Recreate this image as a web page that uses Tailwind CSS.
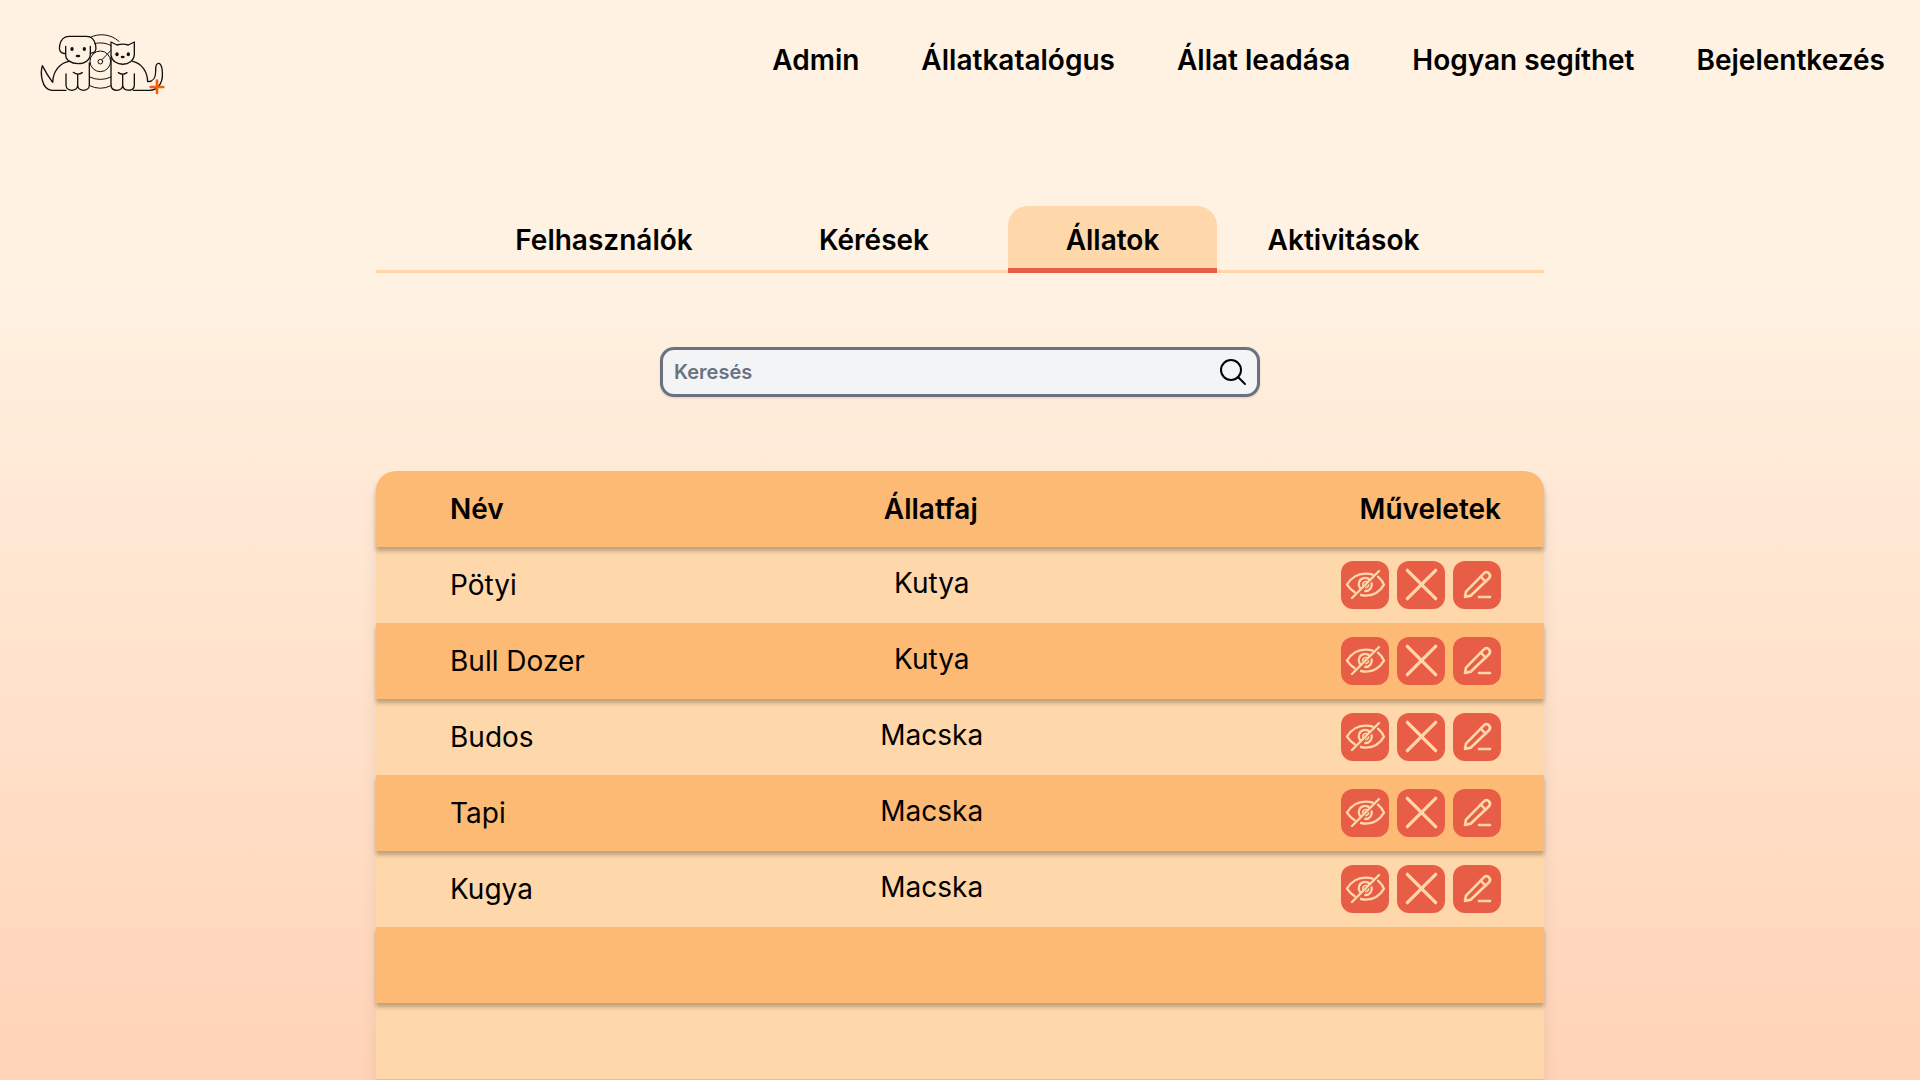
<!DOCTYPE html>
<html lang="hu">
<head>
<meta charset="utf-8">
<meta name="viewport" content="width=device-width, initial-scale=1">
<title>Admin – Állatok</title>
<script src="https://cdn.jsdelivr.net/npm/@tailwindcss/browser@4"></script>
</head>
<body class="h-screen overflow-hidden bg-linear-to-b from-[#fff2e2] from-25% to-[#ffd3b6] font-['Inter',sans-serif] text-[28px] leading-10 text-black">

<!-- Shared icon shapes -->
<svg class="hidden" aria-hidden="true">
  <symbol id="icon-hide" viewBox="0 0 144 144">
    <g fill="none" stroke="currentColor" stroke-width="7" stroke-linecap="round" stroke-linejoin="round">
      <path d="M41 94C32 88 24 80 18 71C31 49 51 38 74 38C82 38 89 39 95 41"/>
      <path d="M111 47C118 53 125 62 129 71C116 93 97 104 75 104C69 104 64 103 60 102"/>
      <path d="M86 56A19 19 0 0 0 59 83"/>
      <path d="M92 67A19 19 0 0 1 73 90"/>
      <path d="M78 62A10 10 0 0 0 65 72M83 72A10 10 0 0 1 75 80" stroke-width="5"/>
      <path d="M114 30L33 111"/>
    </g>
  </symbol>
  <symbol id="icon-delete" viewBox="0 0 144 144">
    <path d="M31 28L116 113M116 28L31 113" fill="none" stroke="currentColor" stroke-width="10" stroke-linecap="round"/>
  </symbol>
  <symbol id="icon-edit" viewBox="0 0 144 144">
    <g fill="none" stroke="currentColor" stroke-width="8" stroke-linecap="round" stroke-linejoin="round">
      <path d="M36 108L39 92L92 38Q99 30 107 36Q115 43 108 52L53 104Z"/>
      <path d="M83 47L98 62"/>
      <path d="M78 108H111"/>
    </g>
  </symbol>
</svg>

<header class="flex items-start justify-between pt-5 pr-[35px] pl-[30px]">
  <a href="#" aria-label="Kezdőlap" class="shrink-0">
    <svg class="h-[85px] w-[150px]" viewBox="0 0 450 255" fill="none" stroke="#111" stroke-width="4" stroke-linecap="round" stroke-linejoin="round" aria-hidden="true">
      <!-- rings behind the animals -->
      <g stroke-width="3">
        <path d="M181 52C205 40 240 40 267 64"/>
        <path d="M194 71C210 67 228 68 243 77"/>
        <circle cx="211" cy="124" r="31"/>
        <circle cx="211" cy="125" r="7"/>
        <path d="M216 119L242 92"/>
        <path d="M179 171Q211 186 243 171M179 197Q211 213 243 197"/>
      </g>
      <!-- dog -->
      <path d="M107 79V104C107 120 123 131 144 131C166 131 181 119 181 102V79"/>
      <path d="M107 100C91 103 86 90 89 76C92 60 102 49 118 49H169C185 49 194 60 197 76C200 91 195 101 181 99"/>
      <path d="M118 124C90 127 69 155 68 187C58 174 47 157 37 137C31 157 33 207 65 211H108"/>
      <path d="M178 129V196C177 216 144 216 143 196V162M108 162V196C109 216 142 216 143 196M130 157Q143 167 157 158"/>
      <g fill="#111" stroke="none">
        <ellipse cx="126" cy="87" rx="5" ry="6"/><ellipse cx="163" cy="87" rx="5" ry="6"/><ellipse cx="144" cy="108" rx="7" ry="4"/>
      </g>
      <!-- cat -->
      <path d="M243 106V66L261 75Q278 70 295 75L313 66V104C310 142 248 142 243 106Z"/>
      <path d="M243 112V196C245 216 277 216 278 196V162M278 196C280 215 312 216 313 196V162M265 158Q278 167 291 158"/>
      <path d="M308 124C335 130 352 154 353 185C369 185 377 177 377 153C376 122 392 125 396 146C402 184 388 212 355 211H310"/>
      <g fill="#111" stroke="none">
        <ellipse cx="261" cy="103" rx="5" ry="6"/><ellipse cx="295" cy="103" rx="5" ry="6"/><ellipse cx="278" cy="111" rx="6" ry="4"/>
      </g>
      <path d="M381 182V219M362 201H400" stroke="#f2600c" stroke-width="8"/>
    </svg>
  </a>
  <nav class="flex gap-[62px] pt-5 font-semibold" aria-label="Főmenü">
    <a href="#">Admin</a>
    <a href="#">Állatkatalógus</a>
    <a href="#">Állat leadása</a>
    <a href="#">Hogyan segíthet</a>
    <a href="#">Bejelentkezés</a>
  </nav>
</header>

<main class="mx-auto mt-[101px] flex max-w-[1168px] flex-col">
  <nav class="flex h-[67px] border-b-3 border-[#fed7aa] pl-[92px] text-center font-semibold" aria-label="Admin szekciók">
    <a href="#" class="w-[272px] pt-[14px]">Felhasználók</a>
    <a href="#" class="w-[268px] pt-[14px]">Kérések</a>
    <a href="#" aria-current="page" class="-mb-[3px] w-[209px] rounded-t-[20px] bg-linear-to-t from-[#e85d45] from-[5px] to-[#fed7aa] to-[5px] pt-[14px]">Állatok</a>
    <a href="#" class="w-[253px] pt-[14px]">Aktivitások</a>
  </nav>

  <form class="mx-auto mt-[74px] flex h-[50px] w-[600px] items-center rounded-[14px] border-3 border-gray-500 bg-gray-100 pr-2 pl-[11px] shadow-sm">
    <input type="search" aria-label="Keresés" placeholder="Keresés" class="min-w-0 flex-1 bg-transparent text-xl font-semibold text-gray-700 outline-none placeholder:text-gray-500">
    <button type="submit" aria-label="Keresés indítása" class="flex size-8 shrink-0 items-center justify-center">
      <svg class="size-7" viewBox="0 0 28 28" fill="none" stroke="#000" stroke-width="2" stroke-linecap="round" aria-hidden="true">
        <circle cx="12" cy="12" r="10"/><path d="M19 19L26 26"/>
      </svg>
    </button>
  </form>

  <table class="mt-[74px] block rounded-t-[20px] shadow-[0_12px_16px_rgba(0,0,0,0.08)]">
    <thead class="block">
      <tr class="relative z-10 grid h-19 grid-cols-[38%_19%_1fr] items-center rounded-t-[20px] bg-[#fdba74] shadow-[0_4px_4px_rgba(0,0,0,0.25)]">
        <th scope="col" class="pl-[74px] text-left font-semibold">Név</th>
        <th scope="col" class="text-center font-semibold">Állatfaj</th>
        <th scope="col" class="pr-[43px] text-right font-semibold">Műveletek</th>
      </tr>
    </thead>
    <tbody id="animals" class="block"></tbody>
  </table>
</main>

<script>
  const animals = [
    ['Pötyi', 'Kutya'],
    ['Bull Dozer', 'Kutya'],
    ['Budos', 'Macska'],
    ['Tapi', 'Macska'],
    ['Kugya', 'Macska'],
    null, null, null
  ];
  const action = (icon, label) =>
    `<button type="button" aria-label="${label}" class="size-12 rounded-xl bg-[#e85d45] text-[#fed7aa]"><svg class="size-12" aria-hidden="true"><use href="#${icon}"/></svg></button>`;
  document.getElementById('animals').innerHTML = animals.map((animal) => {
    const cells = animal
      ? `<td class="pl-[74px]">${animal[0]}</td>
         <td class="pb-1 pl-0.5 text-center">${animal[1]}</td>
         <td class="flex justify-end gap-2 pr-[43px]">
           ${action('icon-hide', animal[0] + ' elrejtése')}
           ${action('icon-delete', animal[0] + ' törlése')}
           ${action('icon-edit', animal[0] + ' szerkesztése')}
         </td>`
      : '<td></td><td></td><td></td>';
    return `<tr class="grid h-19 grid-cols-[38%_19%_1fr] items-center odd:bg-[#fed7aa] even:relative even:z-10 even:bg-[#fdba74] even:shadow-[0_4px_4px_rgba(0,0,0,0.25)]">${cells}</tr>`;
  }).join('');
</script>
</body>
</html>
